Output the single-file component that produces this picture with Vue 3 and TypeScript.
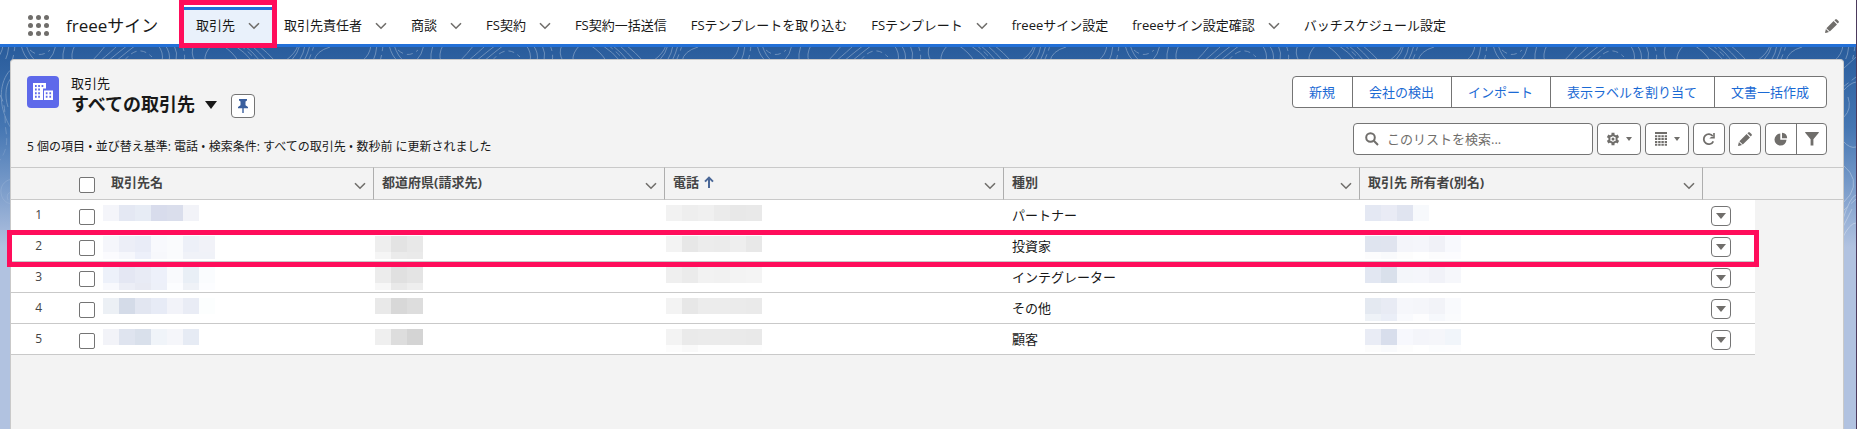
<script setup lang="ts">
import { ref } from 'vue'

interface Tab { label: string; menu?: boolean; active?: boolean }
interface Mosaic { main: string[]; sub?: string[] }
interface Row { name: Mosaic; city?: Mosaic; phone: Mosaic; type: string; owner: Mosaic; marked?: boolean }

const tabs: Tab[] = [
  { label: '取引先', menu: true, active: true },
  { label: '取引先責任者', menu: true },
  { label: '商談', menu: true },
  { label: 'FS契約', menu: true },
  { label: 'FS契約一括送信' },
  { label: 'FSテンプレートを取り込む' },
  { label: 'FSテンプレート', menu: true },
  { label: 'freeeサイン設定' },
  { label: 'freeeサイン設定確認', menu: true },
  { label: 'バッチスケジュール設定' },
]

const actions = ['新規', '会社の検出', 'インポート', '表示ラベルを割り当て', '文書一括作成']

const columns = [
  { key: 'name', label: '取引先名' },
  { key: 'city', label: '都道府県(請求先)' },
  { key: 'phone', label: '電話', sorted: true },
  { key: 'type', label: '種別' },
  { key: 'owner', label: '取引先 所有者(別名)' },
]

const rows: Row[] = [
  {
    name: { main: ['#f4f5fa', '#e4e8f3', '#e7ecf5', '#d8dcec', '#dadeec', '#f2f3f8'] },
    phone: { main: ['#f2f2f2', '#eeeeee', '#f0f0f0', '#ebebeb', '#e8e8e8', '#e9e9e9'] },
    type: 'パートナー',
    owner: { main: ['#e4e8f3', '#e9ebf5', '#e0e4f0', '#f7f9fc'] },
  },
  {
    name: {
      main: ['#f5f6fb', '#eceef7', '#e9ecf7', '#f8f9fd', '#fafbfd', '#edf0f8', '#f1f2f8'],
      sub: ['#fbfbfe', '#f6f7fc', '#edf0fa', '#f7f8fc', '#fafbfd', '#f0f2f8', '#f0f2f8'],
    },
    city: { main: ['#eeeeee', '#e3e3e3', '#e8e8e8'], sub: ['#f5f5f5', '#ebebeb', '#eaeaea'] },
    phone: { main: ['#f3f3f3', '#e7e7e7', '#ececec', '#ebebeb', '#eeeeee', '#e8e8e8'] },
    type: '投資家',
    owner: {
      main: ['#dfe4ef', '#e0e4ef', '#f4f5fa', '#f5f6fb', '#f0f1f7', '#f8f9fd'],
      sub: ['#fcfcfd', '#f9fafc', '#fdfdfd', '#ffffff', '#fcfcfd', '#fcfcfe'],
    },
    marked: true,
  },
  {
    name: {
      main: ['#edf1fa', '#e4e7f3', '#e8ebf5', '#edf0fa', '#f9fafd', '#e9eff6', '#fafcfe'],
      sub: ['#f8f9fd', '#eceef6', '#e8eaf3', '#edf0f9', '#fcfdff', '#eff2f7', '#fcfdff'],
    },
    city: { main: ['#ececec', '#e0e0e0', '#e4e4e4'], sub: ['#f7f7f7', '#e9e9e9', '#eeeeee'] },
    phone: { main: ['#efefef', '#ebebeb', '#f2f2f2', '#f1f1f1', '#f3f3f3', '#f4f4f4'] },
    type: 'インテグレーター',
    owner: { main: ['#e2e7f2', '#d9e0eb', '#f4f6fa', '#f5f6fb', '#f1f2f8', '#f6f7fb'] },
  },
  {
    name: { main: ['#ecf0f5', '#d4dbe8', '#e2e6f1', '#e7ebf6', '#f2f3f9', '#e9ecf5', '#fcfefe'] },
    city: { main: ['#e9e9e9', '#d8d8d8', '#dddddd'] },
    phone: { main: ['#f3f3f3', '#e7e7e7', '#ececec', '#ececec', '#ebebeb', '#eaeaea'] },
    type: 'その他',
    owner: {
      main: ['#e4e9f1', '#e8ebf4', '#f6f7fb', '#f5f6fa', '#f2f3f8', '#f9fafd'],
      sub: ['#eef2f7', '#eaeef7', '#f9fafd', '#fdfdfe', '#f6f8fc', '#fafbfd'],
    },
  },
  {
    name: { main: ['#f2f3f8', '#dfe4ef', '#d9e0eb', '#f0f4f9', '#f5f6fa', '#e6ebf4'] },
    city: { main: ['#efefef', '#dddddd', '#d4d4d4'] },
    phone: {
      main: ['#f3f3f3', '#eaeaea', '#ebebeb', '#ebebeb', '#eaeaea', '#e9e9e9'],
      sub: ['#fcfcfc', '#f9f9f9', '#fdfdfd', '#fdfdfd', '#fdfdfd', '#fdfdfd'],
    },
    type: '顧客',
    owner: {
      main: ['#e9ecf5', '#d8deec', '#f7f8fd', '#f4f5fa', '#f5f6fa', '#f1f5fa'],
      sub: ['#fcfcfc', '#f9fafc', '#fdfdfd', '#ffffff', '#fcfdfe', '#fdfdfe'],
    },
  },
]

const mosaics = (row: Row, key: string): Mosaic | undefined =>
  key === 'name' ? row.name : key === 'city' ? row.city : key === 'phone' ? row.phone : row.owner

const query = ref('')
</script>

<template>
  <div class="page">
    <header class="nav">
      <button class="waffle" aria-label="アプリケーションランチャー">
        <i v-for="n in 9" :key="n"></i>
      </button>
      <span class="app-name">freeeサイン</span>
      <nav class="tabs">
        <div v-for="tab in tabs" :key="tab.label" class="tab" :class="{ active: tab.active }">
          <a href="#">{{ tab.label }}</a>
          <button v-if="tab.menu" class="chevron" :aria-label="tab.label + 'のメニュー'">
            <svg viewBox="0 0 12 8"><path d="M1 1.2 6 6.2 11 1.2" /></svg>
          </button>
        </div>
      </nav>
      <button class="nav-edit" aria-label="ナビゲーションを編集">
        <svg viewBox="0 0 14 14"><path d="M1.4 9.2 8.6 2 12 5.4 4.8 12.6zM9.4 1.2 10.2.5c.5-.5 1.2-.5 1.7 0l1.6 1.6c.5.5.5 1.2 0 1.7l-.8.8zM.9 10 4 13.1l-3.3.8c-.4.1-.7-.2-.6-.6z" /></svg>
      </button>
    </header>

    <main class="stage">
      <svg class="topo" aria-hidden="true">
        <defs>
          <pattern id="contours" width="368" height="390" patternUnits="userSpaceOnUse" x="92">
            <path d="M-2 16Q8 6 14-2M8 14Q20 4 26-2M16 14Q28 4 36-2M24 14Q36 4 44-2M66-2Q72 6 70 14M73-2Q79 6 77 14M82-2Q86 6 84 14M102-2Q98 6 103 14M120-2Q112 6 113 14M130-2Q142 6 146 14M142-2Q154 6 160 14M152-2Q162 6 168 14M159-2Q168 6 175 14M166-2Q176 6 183 14M206-2Q204 6 193 14M208-2Q206 6 199 14M213-2Q212 6 207 14M218-2Q216 6 212 14M238 0Q224 4 222 14M279-2Q278 8 270 14M285-2Q284 8 281 14M297-2Q300 10 306 14M302-2Q306 10 312 14M332-2Q330 8 324 14M341-2Q338 8 339 14M351-2Q346 8 349 14" />
            <path stroke-dasharray="6 4" d="M32 14Q46-4 60 10M90-2Q94 8 92 14M148-2Q158 6 165 14M222-2Q220 6 216 14M291-2Q290 8 288 14M306 3Q316 12 326 3" />
          </pattern>
          <linearGradient id="fade" x1="0" y1="0" x2="0" y2="1">
            <stop offset="0" stop-color="#fff" /><stop offset="1" stop-color="#fff" stop-opacity="0.3" />
          </linearGradient>
        </defs>
        <rect width="100%" height="12" stroke="none" fill="url(#contours)" />
        <g stroke="url(#fade)">
          <path d="M14 20C2 28-2 48 4 66S12 78 14 90M12 30C6 36 4 48 8 60M14 132C6 132 0 138 1 146S8 158 14 156M14 146C8 144 6 148 8 153" />
          <path stroke-dasharray="7 4" d="M0 48C7 60 4 72 6 84S6 106-2 116" />
        </g>
        <svg x="100%" overflow="visible">
          <path d="M-13 22 0 10M-13 44Q-6 36 0 35M-12 70Q-4 62-8 50M-13 94Q-6 102 0 100M-13 118Q4 132-6 148L-13 156M-13 172Q-6 150 0 148M-13 190Q-6 176 0 176M-13 180-4 162" />
          <path stroke-dasharray="7 4" d="M-13 40 0 30M-13 164 0 152" />
        </svg>
      </svg>

      <section class="panel">
        <div class="panel-head">
          <div class="title-row">
            <span class="object-icon">
              <svg viewBox="0 0 20 18">
                <path fill="#fff" d="M0 0h13v5.500h-3V17H0zM11 7.500h9V17h-9z" />
                <path fill="#5e69ea" d="M2 2h1.700v2H2zM5.200 2h1.700v2H5.200zM8.600 2h1.700v2H8.600zM2 5.600h1.700v2H2zM5.200 5.600h1.700v2H5.200zM2 9.200h1.700v2H2zM5.200 9.200h1.700v2H5.200zM2 12.800h1.700v2H2zM5.200 12.800h1.700v2H5.200zM12.800 9.200h1.700v2h-1.700zM16.400 9.200h1.700v2h-1.700zM12.800 12.800h1.700v2h-1.700zM16.400 12.800h1.700v2h-1.700z" />
              </svg>
            </span>
            <div class="titles">
              <p class="object-name">取引先</p>
              <div class="view-line">
                <h1>すべての取引先</h1>
                <button class="view-menu" aria-label="リストビューを選択">
                  <svg viewBox="0 0 12 8"><path d="M0 0h12L6 8z" /></svg>
                </button>
                <button class="box pin" aria-label="固定">
                  <svg viewBox="0 0 10 14"><path d="M1 0h8v1.600L7.500 2.400v3.800L10 8v1.300H5.700V14H4.300V9.300H0V8l2.500-1.800V2.400L1 1.600z" /></svg>
                </button>
              </div>
            </div>
          </div>
          <div class="actions">
            <button v-for="label in actions" :key="label">{{ label }}</button>
          </div>
          <p class="status">5 個の項目 • 並び替え基準: 電話 • 検索条件: すべての取引先 • 数秒前 に更新されました</p>
          <div class="tools">
            <label class="search">
              <svg viewBox="0 0 14 14"><circle cx="5.500" cy="5.500" r="4.300" /><path d="m8.800 8.800 4.200 4.200" /></svg>
              <input v-model="query" type="search" placeholder="このリストを検索..." aria-label="このリストを検索" />
            </label>
            <button class="box wide" aria-label="リストビューコントロール">
              <svg class="i14" viewBox="0 0 14 14">
                <path fill="none" stroke="#706e6b" stroke-width="2" stroke-linejoin="round" d="M7 2.900 10.600 4.950v4.100L7 11.100 3.400 9.050v-4.100z" />
                <path stroke="#706e6b" stroke-width="3" d="M7 .8v2M7 11.200v2M1.600 3.900l1.800 1M10.600 9.100l1.800 1M1.600 10.100l1.800-1M10.600 4.900l1.800-1" />
                <circle cx="7" cy="7" r="1.500" />
              </svg>
              <svg class="caret" viewBox="0 0 6 4"><path d="M0 0h6L3 4z" /></svg>
            </button>
            <button class="box wide" aria-label="表示方法">
              <svg class="i14" viewBox="0 0 14 14"><path d="M1 0h12v2H1zM1 3.300h2.300v2H1zM4.200 3.300h2.400v2H4.200zM7.400 3.300h2.400v2H7.400zM10.700 3.300H13v2h-2.300zM1 6.100h2.300v2H1zM4.200 6.100h2.400v2H4.200zM7.400 6.100h2.400v2H7.400zM10.700 6.100H13v2h-2.300zM1 8.900h2.300v2H1zM4.200 8.900h2.400v2H4.200zM7.400 8.900h2.400v2H7.400zM10.700 8.900H13v2h-2.300zM1 11.700h2.300v2H1zM4.200 11.700h2.400v2H4.200zM7.400 11.700h2.400v2H7.400zM10.700 11.700H13v2h-2.300z" /></svg>
              <svg class="caret" viewBox="0 0 6 4"><path d="M0 0h6L3 4z" /></svg>
            </button>
            <button class="box" aria-label="更新">
              <svg class="i14" viewBox="0 0 14 14"><path fill="none" stroke="#706e6b" stroke-width="1.800" d="M11.300 9.300A5 5 0 1 1 10.800 4.200" /><path d="M12.800 1v5.600H7.300L9 5h2.200V1z" /></svg>
            </button>
            <button class="box" aria-label="リストを編集">
              <svg class="i14" viewBox="0 0 14 14"><path d="M1.400 9.200 8.600 2 12 5.400 4.800 12.600zM9.400 1.200 10.200.5c.5-.5 1.200-.5 1.700 0l1.600 1.600c.5.5.5 1.200 0 1.700l-.8.8zM.9 10 4 13.100l-3.300.8c-.4.1-.7-.2-.6-.6z" /></svg>
            </button>
            <div class="pair">
              <button aria-label="グラフを表示">
                <svg class="i14" viewBox="0 0 14 14"><path d="M6.300 1.600v6.200h6.200A6 6 0 1 1 6.300 1.600z" /><path d="M8 .8A5.700 5.700 0 0 1 13.200 6.200H8z" /></svg>
              </button>
              <button aria-label="検索条件を表示">
                <svg class="i14" viewBox="0 0 14 14"><path d="M.6 0h12.800c.5 0 .7.500.4.800L8.400 7.200v6.300H5.600V7.200L.2.800C-.1.500.1 0 .6 0z" /></svg>
              </button>
            </div>
          </div>
        </div>

        <div class="grid">
          <table>
            <colgroup>
              <col class="c-num" /><col class="c-check" /><col class="c-name" /><col class="c-city" />
              <col class="c-phone" /><col class="c-type" /><col class="c-owner" /><col class="c-act" />
            </colgroup>
            <thead>
              <tr>
                <th></th>
                <th><input type="checkbox" aria-label="すべて選択" /></th>
                <th v-for="col in columns" :key="col.key" class="data">
                  <div class="head-cell">
                    <span>{{ col.label }}</span>
                    <svg v-if="col.sorted" class="sort" viewBox="0 0 10 12"><path d="M5 12V2M1 5.600 5 1.600l4 4" /></svg>
                    <button class="chevron" :aria-label="col.label + 'のアクション'">
                      <svg viewBox="0 0 12 8"><path d="M1 1.200 6 6.200 11 1.200" /></svg>
                    </button>
                  </div>
                </th>
                <th></th>
              </tr>
            </thead>
            <tbody>
              <tr v-for="(row, i) in rows" :key="i" :class="{ marked: row.marked }">
                <td class="num">{{ i + 1 }}</td>
                <td class="check"><input type="checkbox" :aria-label="'項目 ' + (i + 1) + ' を選択'" /></td>
                <td v-for="col in columns" :key="col.key" :class="col.key">
                  <template v-if="col.key === 'type'">{{ row.type }}</template>
                  <div v-else-if="mosaics(row, col.key)" class="mosaic">
                    <div><i v-for="(c, k) in mosaics(row, col.key)!.main" :key="k" :style="{ background: c }"></i></div>
                    <div class="sub"><i v-for="(c, k) in mosaics(row, col.key)!.sub" :key="k" :style="{ background: c }"></i></div>
                  </div>
                </td>
                <td class="act">
                  <button class="box row-menu" :aria-label="'項目 ' + (i + 1) + ' のアクション'">
                    <svg viewBox="0 0 10 6"><path d="M0 0h10L5 6z" /></svg>
                  </button>
                </td>
              </tr>
            </tbody>
          </table>
          <div class="head-fill"></div>
        </div>
      </section>
    </main>
  </div>
</template>

<style>
body { margin: 0; }
</style>

<style scoped>
* { box-sizing: border-box; }
.page {
  min-height: 100vh;
  display: flex;
  flex-direction: column;
  border-right: 1px solid #4c3a5c;
  color: #181818;
  font: 13px/20px "Open Sans", "Noto Sans CJK JP", sans-serif;
}
button { font: inherit; color: inherit; background: none; border: 0; padding: 0; margin: 0; display: flex; align-items: center; justify-content: center; cursor: pointer; }
a { color: inherit; text-decoration: none; }
p, h1 { margin: 0; }
svg { display: block; fill: #706e6b; }

.nav {
  display: flex;
  align-items: center;
  height: 47px;
  padding: 7px 17px 0 28px;
  border-bottom: 3px solid #2270d8;
  background: #fff;
}
.waffle { display: grid; grid-template-columns: repeat(3, 5px); gap: 3px; }
.waffle i { width: 5px; height: 5px; border-radius: 50%; background: #706e6b; }
.app-name { width: 118px; margin-left: 17px; font-size: 17px; line-height: 24px; white-space: nowrap; }
.tabs { flex: 1; display: flex; align-self: stretch; }
.tab { position: relative; display: flex; align-items: center; gap: 13px; padding: 0 12px; white-space: nowrap; }
.tab a { padding-bottom: 2px; }
.tab.active { background: #e9f1fb; box-shadow: inset 0 3px #2270d8; }
.tab.active::after { content: ""; position: absolute; inset: -7px -5px -4px; border: 5px solid #ff0d5b; z-index: 2; }
.chevron svg { width: 12px; height: 8px; fill: none; stroke: #706e6b; stroke-width: 1.6; }
.nav-edit svg { width: 14px; height: 14px; }

.stage {
  position: relative;
  flex: 1;
  display: flex;
  padding: 12px 12px 0 10px;
  background: linear-gradient(#295c9c, #4576b2 80px, #7095c6 130px, #b1c2e0 200px);
}
.topo { position: absolute; inset: 0; width: 100%; height: 200px; fill: none; stroke: #fff; stroke-width: 1; opacity: 0.3; overflow: hidden; }
.topo svg { fill: none; }
.panel {
  position: relative;
  flex: 1;
  min-width: 0;
  border: 1px solid #c9c9c9;
  border-bottom: 0;
  border-radius: 4px 4px 0 0;
  background: #f3f3f3;
}
.panel-head {
  display: grid;
  grid-template-columns: 1fr auto;
  row-gap: 15px;
  padding: 16px 16px 12px;
}
.title-row { display: flex; gap: 12px; height: 32px; }
.object-icon { width: 32px; height: 32px; border-radius: 4px; background: #5e69ea; display: grid; place-items: center; }
.object-icon svg { width: 20px; height: 18px; }
.object-name { line-height: 14px; }
.view-line { display: flex; align-items: center; height: 28px; }
h1 { font-size: 18px; line-height: 24px; font-weight: 700; white-space: nowrap; }
.view-menu { margin: 2px 14px 0 10px; }
.view-menu svg { width: 12px; height: 8px; fill: #181818; }
.box { width: 32px; height: 32px; border: 1px solid #747474; border-radius: 4px; background: #fff; }
.box.pin { width: 24px; height: 24px; margin-top: 4px; }
.pin svg { width: 10px; height: 14px; fill: #3a5f9e; }
.actions, .pair { display: flex; justify-self: end; border: 1px solid #747474; border-radius: 4px; background: #fff; height: 32px; }
.actions button { padding: 0 17px 0 16px; color: #1b6ad4; white-space: nowrap; }
.actions button + button, .pair button + button { border-left: 1px solid #747474; }
.status { font-size: 12px; line-height: 16px; padding-top: 16px; }
.tools { display: flex; gap: 4px; justify-self: end; }
.search { display: flex; align-items: center; gap: 8px; width: 240px; height: 32px; padding: 0 11px; border: 1px solid #747474; border-radius: 4px; background: #fff; }
.search svg { width: 14px; height: 14px; fill: none; stroke: #706e6b; stroke-width: 2; }
.search input { flex: 1; min-width: 0; border: 0; padding: 0; outline: 0; background: none; font: inherit; }
.search input::placeholder { color: #706e6b; opacity: 1; }
.box.wide { width: 44px; gap: 6px; }
.i14 { width: 14px; height: 14px; }
.caret { width: 6px; height: 4px; }
.pair button { width: 30px; }

.grid { display: flex; align-items: flex-start; }
.head-fill { flex: 1; height: 33px; border: solid #c9c9c9; border-width: 1px 0; }
table { table-layout: fixed; width: 1744px; border-collapse: separate; border-spacing: 0; }
.c-num { width: 54px; }
.c-check { width: 38px; }
.c-name { width: 271px; }
.c-city { width: 291px; }
.c-phone { width: 339px; }
.c-type { width: 356px; }
.c-owner { width: 343px; }
.c-act { width: 52px; }
th, td { padding: 0; text-align: left; font-weight: 400; }
th { height: 33px; border: solid #c9c9c9; border-width: 1px 0; color: #444; }
th.data { border-right: 1px solid #aeaeae; padding: 0 7px 4px 8px; }
.head-cell { display: flex; align-items: center; font-weight: 700; }
.head-cell .chevron { margin: 8px 0 0 auto; }
.sort { width: 10px; height: 12px; margin-left: 5px; fill: none; stroke: #4a6797; stroke-width: 2; }
input[type="checkbox"] { display: block; appearance: none; width: 16px; height: 16px; margin: 3px 0 0 14px; border: 1px solid #747474; border-radius: 2px; background: #fff; }
tbody tr { position: relative; }
td { height: 31px; border-bottom: 1px solid #c9c9c9; background: #fff; }
.num { padding-right: 23px; text-align: right; color: #444; font-size: 12px; }
.type { padding-left: 8px; }
.name, .city, .phone, .owner { vertical-align: top; padding-top: 5px; }
.city, .phone { padding-left: 1px; }
.owner { padding-left: 5px; }
.mosaic { height: 24px; }
.mosaic div { display: flex; }
.mosaic i { width: 16px; height: 16px; }
.mosaic .sub i { height: 7px; }
.act { padding: 2px 0 0 8px; }
.box.row-menu { width: 20px; height: 20px; }
.row-menu svg { width: 10px; height: 6px; }
.marked::after { content: ""; position: absolute; inset: -1px -4px -5px; border: 5px solid #ff0d5b; z-index: 2; }
</style>
